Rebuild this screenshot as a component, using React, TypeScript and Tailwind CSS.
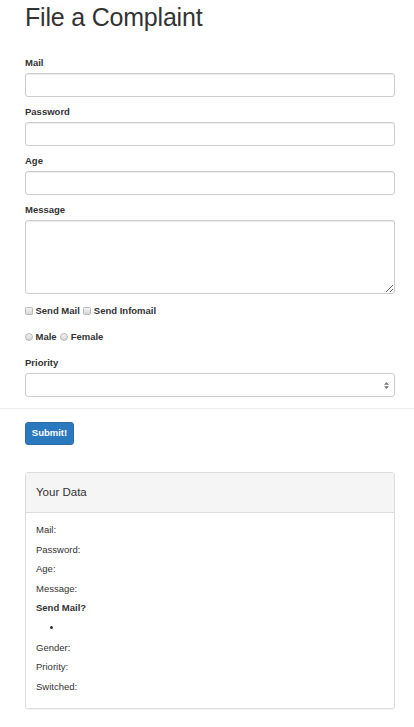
import React from "react";

const font = { fontFamily: '"Liberation Sans", Arial, sans-serif' };

function Label({ children }: { children: React.ReactNode }) {
  return (
    <label className="block text-[9.5px] leading-[14px] font-bold text-[#333] mb-[2.5px]">
      {children}
    </label>
  );
}

function Input() {
  return (
    <input
      type="text"
      className="block w-full h-[24px] rounded-[3px] border border-[#ccc] bg-white shadow-[inset_0_1px_1px_rgba(0,0,0,0.075)] outline-none"
    />
  );
}

function Check({ round }: { round?: boolean }) {
  return (
    <span
      className={
        "inline-block w-[8px] h-[8px] border border-[#b8b8b8] bg-gradient-to-b from-[#f4f4f4] to-[#d6d6d6] " +
        (round ? "rounded-full" : "rounded-[1.5px]")
      }
    />
  );
}

export default function App() {
  return (
    <div style={font} className="bg-white text-[#333] w-[414px] min-h-[727px]">
      <div className="pl-[25px] pr-[19px]">
        <h1 className="pt-[3.6px] text-[25px] leading-[27.5px] font-medium text-[#333] tracking-[-0.2px]">
          File a Complaint
        </h1>
        <div className="h-[25.4px]" />
        <div className="mb-[8.5px]">
          <Label>Mail</Label>
          <Input />
        </div>
        <div className="mb-[8.5px]">
          <Label>Password</Label>
          <Input />
        </div>
        <div className="mb-[8.5px]">
          <Label>Age</Label>
          <Input />
        </div>
        <div className="mb-[8.5px]">
          <Label>Message</Label>
          <textarea className="block w-full h-[74px] rounded-[3px] border border-[#ccc] bg-white shadow-[inset_0_1px_1px_rgba(0,0,0,0.075)] outline-none resize-y" />
        </div>
        <div className="flex items-center h-[14px] mt-[10px] text-[9.5px] font-bold">
          <Check />
          <span className="ml-[2.5px] mr-[3.5px]">Send Mail</span>
          <Check />
          <span className="ml-[2.5px]">Send Infomail</span>
        </div>
        <div className="flex items-center h-[14px] mt-[12.5px] text-[9.5px] font-bold">
          <Check round />
          <span className="ml-[2.5px] mr-[3px]">Male</span>
          <Check round />
          <span className="ml-[3px]">Female</span>
        </div>
        <div className="mt-[12px]">
          <Label>Priority</Label>
          <div className="relative h-[24px] rounded-[3px] border border-[#ccc] bg-white">
            <svg
              className="absolute right-[5px] top-[8px]"
              width="5"
              height="7"
              viewBox="0 0 5 7"
            >
              <path d="M2.5 0 L5 2.8 L0 2.8 Z" fill="#777" />
              <path d="M0 4.2 L5 4.2 L2.5 7 Z" fill="#777" />
            </svg>
          </div>
        </div>
      </div>
      <div className="mt-[11px] h-px bg-[#eee]" />
      <div className="pl-[25px] pr-[19px]">
        <button className="mt-[13px] h-[23px] w-[49px] rounded-[3px] bg-[#2a79bf] border border-[#2e6da4] text-white text-[9.5px] font-bold">
          Submit!
        </button>
        <div className="mt-[27px] border border-[#ddd] rounded-[3px] shadow-[0_1px_1px_rgba(0,0,0,0.05)]">
          <div className="h-[40px] bg-[#f5f5f5] border-b border-[#ddd] flex items-center px-[10px] text-[11.5px] text-[#333]">
            Your Data
          </div>
          <div className="px-[10px] pt-[10px] pb-[9px] text-[9.5px] leading-[14px]">
            <p className="mb-[5.6px]">Mail:</p>
            <p className="mb-[5.6px]">Password:</p>
            <p className="mb-[5.6px]">Age:</p>
            <p className="mb-[5.6px]">Message:</p>
            <p className="mb-[5.6px] font-bold">Send Mail?</p>
            <div className="mb-[5.6px] h-[14px] flex items-center pl-[14px]">
              <span className="inline-block w-[3px] h-[3px] rounded-full bg-[#333]" />
            </div>
            <p className="mb-[5.6px]">Gender:</p>
            <p className="mb-[5.6px]">Priority:</p>
            <p className="mb-[5.6px]">Switched:</p>
          </div>
        </div>
      </div>
    </div>
  );
}
